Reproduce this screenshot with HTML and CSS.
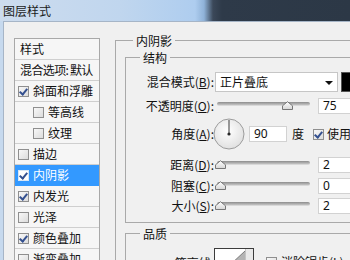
FILE: index.html
```html
<!DOCTYPE html>
<html lang="zh-CN">
<head>
<meta charset="utf-8">
<title>图层样式</title>
<link rel="stylesheet" href="styles.css">
</head>
<body>
<div class="win">
  <div class="titlebar"><span class="title">图层样式</span></div>
  <div class="dialog">
    <div class="list">
      <div class="row plain">样式</div>
      <div class="row plain tight">混合选项<span class="colon">:</span>默认</div>
      <div class="row"><span class="cb on"></span>斜面和浮雕</div>
      <div class="row sub"><span class="cb"></span>等高线</div>
      <div class="row sub"><span class="cb"></span>纹理</div>
      <div class="row"><span class="cb"></span>描边</div>
      <div class="row sel"><span class="cb on"></span>内阴影</div>
      <div class="row"><span class="cb on"></span>内发光</div>
      <div class="row"><span class="cb"></span>光泽</div>
      <div class="row"><span class="cb on"></span>颜色叠加</div>
      <div class="row"><span class="cb"></span>渐变叠加</div>
    </div>

    <div class="group outer">
      <div class="legend lg-outer">内阴影</div>

      <div class="group struct">
        <div class="legend lg-inner">结构</div>

        <div class="frow r-blend">
          <span class="label">混合模式(<u>B</u>):</span>
          <div class="select"><span>正片叠底</span><span class="arrow"></span></div>
          <div class="swatch"></div>
        </div>

        <div class="frow r-op">
          <span class="label">不透明度(<u>O</u>):</span>
          <div class="slider"><div class="track"></div><span class="thumb" style="left:65px"></span></div>
          <div class="num">75</div>
        </div>

        <div class="frow r-angle">
          <span class="label">角度(<u>A</u>):</span>
          <svg class="dial" width="32" height="32" viewBox="0 0 32 32">
            <defs>
              <radialGradient id="dg" cx="45%" cy="40%" r="65%">
                <stop offset="0" stop-color="#ffffff"/>
                <stop offset="1" stop-color="#dedede"/>
              </radialGradient>
            </defs>
            <circle cx="16" cy="16" r="15" fill="url(#dg)" stroke="#9c9c9c"/>
            <line x1="16" y1="16" x2="16" y2="2" stroke="#3a3a3a" stroke-width="1"/>
            <circle cx="16" cy="16" r="1.6" fill="#2a2a2a"/>
          </svg>
          <div class="num small">90</div>
          <span class="unit">度</span>
          <span class="cb on gl"></span>
          <span class="cbtext">使用全局光</span>
        </div>

        <div class="frow r-dist">
          <span class="label">距离(<u>D</u>):</span>
          <div class="slider"><div class="track"></div><span class="thumb" style="left:-2px"></span></div>
          <div class="num">2</div>
        </div>

        <div class="frow r-choke">
          <span class="label">阻塞(<u>C</u>):</span>
          <div class="slider"><div class="track"></div><span class="thumb" style="left:-2px"></span></div>
          <div class="num">0</div>
        </div>

        <div class="frow r-size">
          <span class="label">大小(<u>S</u>):</span>
          <div class="slider"><div class="track"></div><span class="thumb" style="left:-2px"></span></div>
          <div class="num">2</div>
        </div>
      </div>

      <div class="group quality">
        <div class="legend lg-inner">品质</div>
        <div class="qrow">
          <span class="label qlabel">等高线:</span>
          <div class="contour">
            <svg width="38" height="30" viewBox="0 0 38 30">
              <polygon points="0,30 30,2 30,30" fill="#b4b4b4"/>
              <line x1="0" y1="30" x2="30" y2="2" stroke="#7c7c7c"/>
              <rect x="30" y="0" width="8" height="30" fill="#e9e9e9"/>
              <line x1="30.5" y1="0" x2="30.5" y2="30" stroke="#c4c4c4"/>
            </svg>
          </div>
          <span class="cb aa"></span>
          <span class="cbtext aatext">消除锯齿(<u>L</u>)</span>
        </div>
      </div>
    </div>
  </div>
</div>
</body>
</html>
```

FILE: styles.css
```css
* { box-sizing: border-box; }

html, body {
  margin: 0;
  padding: 0;
  background: #f0f0f0;
}

.win {
  width: 350px;
  height: 260px;
  overflow: hidden;
  background: #c6d9ee;
  font-family: "Noto Sans CJK SC", "Noto Sans", sans-serif;
  font-size: 12px;
  color: #111;
  display: flex;
  flex-direction: column;
}

.titlebar {
  height: 21px;
  flex: none;
  background: linear-gradient(90deg, #cddcee 0, #c0d6ee 120px, #aecdef 195px, #8fb2d8 204px, #3b4859 213px, #2e3a49 222px, #2c3846 100%);
  display: flex;
  align-items: center;
  padding-left: 3px;
}

.title {
  font-size: 12px;
  line-height: 16px;
  color: #1a1a1a;
}

.dialog {
  flex: 1;
  margin-left: 3px;
  border-left: 1px solid #a6b5c7;
  border-top: 1px solid #a6b5c7;
  background: #f0f0f0;
  display: flex;
  align-items: flex-start;
  min-width: 0;
}

/* ---------- left list ---------- */
.list {
  flex: none;
  width: 86px;
  margin-left: 10px;
  margin-top: 16px;
  border: 1px solid #a8a8a8;
  border-bottom: none;
  background: #f6f6f6;
}

.row {
  height: 21px;
  border-bottom: 1px solid #cfcfcf;
  display: flex;
  align-items: center;
  padding-left: 3px;
  line-height: 16px;
  white-space: nowrap;
}

.row.plain { padding-left: 5px; }
.row.tight { letter-spacing: -0.6px; }
.row.tight .colon { letter-spacing: 0; margin: 0 1px 0 0; }
.row.sub { padding-left: 18px; }

.row.sel {
  background: #3399ff;
  color: #fff;
  border-bottom-color: #3399ff;
}

.cb {
  flex: none;
  width: 11px;
  height: 11px;
  border: 1px solid #8f8f8f;
  background: linear-gradient(135deg, #f8f8f8, #dcdcdc);
  margin-right: 4px;
  position: relative;
}

.cb.on::after {
  content: "";
  position: absolute;
  left: 2px;
  top: 0px;
  width: 3px;
  height: 6px;
  border-right: 2px solid #34508f;
  border-bottom: 2px solid #34508f;
  transform: rotate(40deg);
}

.row.sel .cb {
  background: #ffffff;
  border-color: #d8e6f5;
}

/* ---------- group boxes ---------- */
.group {
  border-top: 1px solid #a9a9a9;
  border-left: 1px solid #a9a9a9;
}

.legend {
  display: block;
  width: max-content;
  height: 16px;
  line-height: 16px;
  margin-top: -8px;
  padding: 0 3px;
  background: #f0f0f0;
  white-space: nowrap;
}

.outer {
  flex: none;
  width: 300px;
  margin-left: 15px;
  margin-top: 18px;
  padding-left: 9px;
  height: 260px;
}

.lg-outer { margin-left: 8px; }
.lg-inner { margin-left: 14px; }

.struct {
  margin-top: 8px;
  border-bottom: 1px solid #a9a9a9;
  padding-bottom: 6px;
}

.quality {
  margin-top: 10px;
  height: 60px;
}

/* ---------- form rows ---------- */
.frow {
  display: flex;
  align-items: center;
  height: 20px;
  white-space: nowrap;
}

.r-blend { margin-top: 6px; }
.r-op { margin-top: 4px; }
.r-angle { margin-top: 2px; height: 32px; }
.r-dist { margin-top: 5px; }
.r-choke { margin-top: 1px; }
.r-size { margin-top: 0; }

.label {
  flex: none;
  width: 88px;
  text-align: right;
  margin-right: 1px;
  line-height: 16px;
}

.label u { text-decoration-thickness: 1px; text-underline-offset: 1px; }

.select {
  flex: none;
  width: 123px;
  height: 20px;
  background: #fff;
  border: 1px solid #c6c6c6;
  display: flex;
  align-items: center;
  justify-content: space-between;
  padding-left: 4px;
  padding-right: 4px;
  line-height: 16px;
}

.arrow {
  width: 0;
  height: 0;
  border-left: 4px solid transparent;
  border-right: 4px solid transparent;
  border-top: 4px solid #111;
  margin-top: 1px;
}

.swatch {
  flex: none;
  width: 22px;
  height: 20px;
  margin-left: 3px;
  background: #000;
  border: 1px solid #555;
}

.slider {
  flex: none;
  position: relative;
  width: 93px;
  height: 20px;
  margin-left: 2px;
}

.track {
  margin-top: 6px;
  height: 4px;
  border-radius: 2px;
  background: linear-gradient(180deg, #8c8c8c, #c4c4c4);
  border-bottom: 1px solid #d8d8d8;
}

.thumb {
  position: absolute;
  top: 5px;
  width: 11px;
  height: 9px;
  background:
    url("data:image/svg+xml,%3Csvg xmlns='http://www.w3.org/2000/svg' width='11' height='9'%3E%3Cdefs%3E%3ClinearGradient id='t' x1='0' y1='0' x2='0' y2='1'%3E%3Cstop offset='0' stop-color='%23ffffff'/%3E%3Cstop offset='1' stop-color='%23d6d6d6'/%3E%3C/linearGradient%3E%3C/defs%3E%3Cpath d='M0.5 8.5V4.8L5.5 0.7L10.5 4.8V8.5Z' fill='url(%23t)' stroke='%23777'/%3E%3C/svg%3E") no-repeat;
}

.num {
  flex: none;
  width: 50px;
  height: 16px;
  margin-left: 8px;
  background: #fff;
  border: 1px solid #d2d2d2;
  border-right: none;
  padding-left: 4px;
  font-family: "Noto Sans", "Open Sans", sans-serif;
  font-size: 12px;
  line-height: 14px;
}

.dial {
  flex: none;
  margin-left: -2px;
  display: block;
}

.num.small {
  width: 38px;
  margin-left: 4px;
  border-right: 1px solid #d2d2d2;
}

.unit {
  margin-left: 5px;
  line-height: 16px;
}

.gl {
  margin-left: 9px;
  margin-right: 3px;
}

.cbtext { line-height: 16px; }

/* ---------- quality ---------- */
.qrow {
  display: flex;
  align-items: flex-start;
  margin-top: 6px;
  white-space: nowrap;
}

.qlabel {
  margin-top: 7px;
  margin-right: 0;
}

.contour {
  flex: none;
  width: 40px;
  height: 32px;
  margin-left: 0;
  border: 1px solid #3c3c3c;
  background: #fff;
}

.contour svg { display: block; }

.aa {
  margin-left: 12px;
  margin-top: 9px;
  margin-right: 4px;
}

.aatext { margin-top: 6px; }
```
